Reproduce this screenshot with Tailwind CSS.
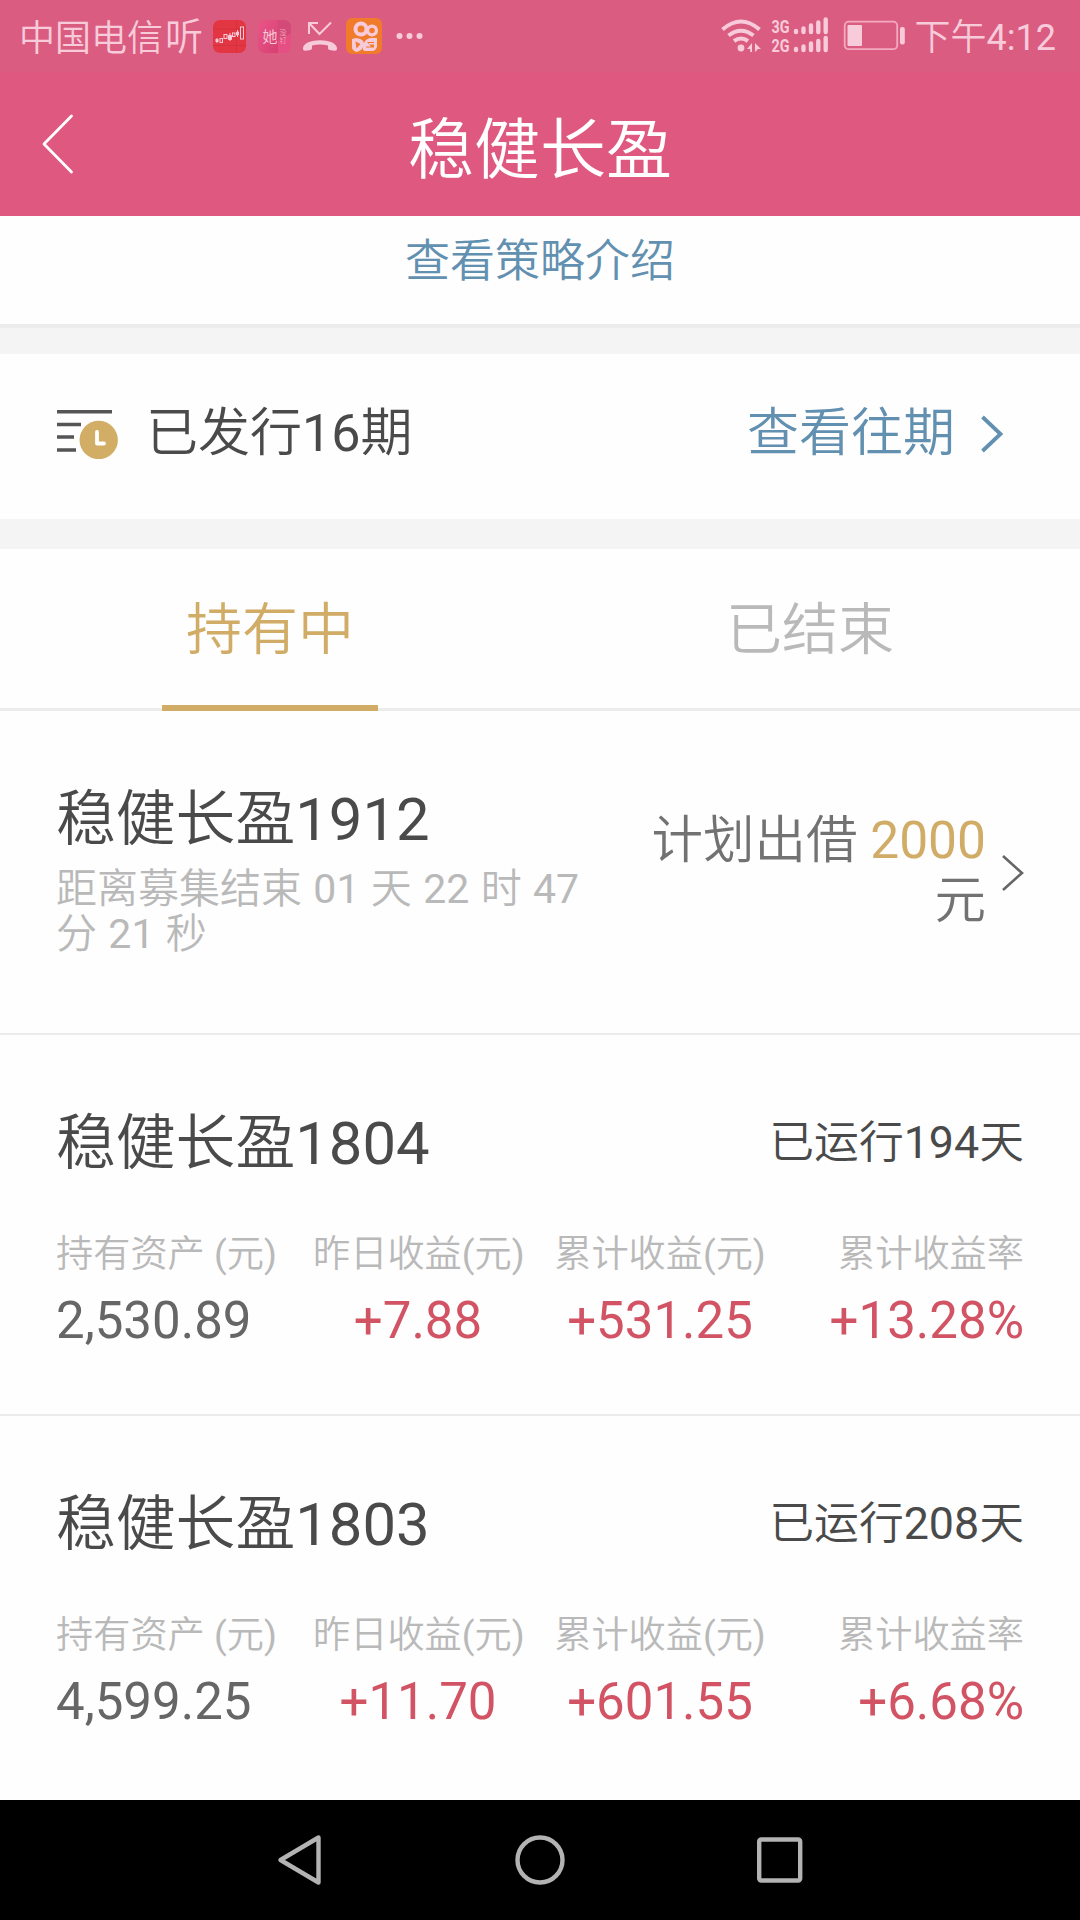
<!DOCTYPE html>
<html lang="zh-CN">
<head>
<meta charset="utf-8">
<title>稳健长盈</title>
<script src="https://cdn.jsdelivr.net/npm/@tailwindcss/browser@4"></script>
</head>
<body class="bg-white">
<div class="flex h-[1920px] w-[1080px] flex-col overflow-hidden bg-[#fefefe] font-['Roboto','Noto_Sans_CJK_SC_DemiLight','Noto_Sans_CJK_SC',sans-serif] text-[#4a4a4a] whitespace-nowrap">

  <!-- status bar -->
  <div class="flex h-[72px] shrink-0 items-center justify-between bg-[#da5d81] pl-[19px] pr-[24px] text-[36px] leading-[72px] text-[#f8cbda]">
    <div class="flex items-center">
      <span class="w-[146px] pt-[5px] leading-[68px]">中国电信</span>
      <span class="w-[48px] pt-[2px] text-[38px] leading-[70px]">听</span>
      <svg class="h-[36px] w-[180px]" viewBox="213 18 180 36">
        <defs><linearGradient id="rose" x1="0" x2="1" y1="0" y2="1"><stop offset="0" stop-color="#ea5689"/><stop offset="1" stop-color="#d73f70"/></linearGradient></defs>
        <rect x="213" y="20" width="33" height="33" rx="7" fill="#e23642"/>
        <path d="M236.500 20v33M213 45.500h33M213 29h33" stroke="#cf2f3d" stroke-width=".6"/>
        <g fill="#f8cbda" stroke="#f8cbda" stroke-width="1"><path d="M216 39h2v3h-2zM228.500 35.500h3v4h-3zM236.500 32h2v3h-2zM230 33v8M237.500 30v7" /></g>
        <g fill="none" stroke="#f8cbda" stroke-width="1"><rect x="220" y="38.500" width="2.500" height="4"/><rect x="224" y="34.500" width="3" height="4"/><rect x="232.500" y="33" width="2.500" height="3.500"/><rect x="240.500" y="27" width="3" height="12"/></g>
        <rect x="258" y="20" width="33" height="33" rx="7" fill="#e64f83"/>
        <path d="M265 20h13v33h-13a7 7 0 0 1-7-7V27a7 7 0 0 1 7-7z" fill="url(#rose)"/>
        <path d="M278 20h6a7 7 0 0 1 7 7v6l-13 8z" fill="#d34a78"/>
        <text x="262.500" y="42" font-size="15" fill="#f8cbda">她</text>
        <text x="279.500" y="35" font-size="7" fill="#f3a4c0">没</text>
        <text x="279.500" y="43" font-size="7" fill="#f3a4c0">钉</text>
        <path d="M309 34V23h9M309 23l10.500 11L331 22.500" fill="none" stroke="#f8cbda" stroke-width="2"/>
        <path d="M303 48.500c0-11 34-11 34 0v.5q0 2-2.500 1.800l-5-.8q-1.500-.3-1.500-2v-2.500q-8-2-16 0V48q0 1.700-1.500 2l-5 .8q-2.500.2-2.500-1.800z" fill="#f8cbda"/>
        <rect x="346" y="18" width="36" height="36" rx="6" fill="#f07c2b"/>
        <g fill="#f8cbda"><circle cx="361" cy="29" r="7.500"/><circle cx="372" cy="30.500" r="6"/><path d="M352 39l4-1q8 1 8 6t-7 8q-4-1-5-4zM364 43q2-5 8-5h5v9q-1 3-4 4h-8q-3-1-2-3z"/></g>
        <g fill="#f07c2b"><circle cx="361" cy="29" r="3.500"/><circle cx="372" cy="30.500" r="2.800"/><path d="M355.500 41.500l5 2.500-4 4.500zM367 42h7v1h-5v1.500h5v3h-8v-1h5z"/></g>
      </svg>
      <svg class="h-[8px] w-[30px]" viewBox="392.500 32 30 8" fill="#f8cbda"><circle cx="399" cy="36" r="3"/><circle cx="409" cy="36" r="3"/><circle cx="419" cy="36" r="3"/></svg>
    </div>
    <div class="flex items-center">
      <svg class="h-[40px] w-[195px]" viewBox="720 16 195 40" fill="#f8cbda">
        <g fill="none" stroke="#f8cbda" stroke-width="4"><path d="M722.500 29.500q18.500-16 37 0M728.500 35.500q12.500-9.500 25 0M734 41q7-5 14 0" /></g>
        <circle cx="741" cy="48" r="3.400"/>
        <path d="M752 43v9h-1.800v-3h-3.200zM755 43l6 6h-3l-3 3z"/>
        <text x="771.500" y="33" font-size="19" font-weight="700" textLength="18" lengthAdjust="spacingAndGlyphs">3G</text>
        <text x="771.500" y="52" font-size="19" font-weight="700" textLength="18" lengthAdjust="spacingAndGlyphs">2G</text>
        <g stroke="#f8cbda" stroke-width="4.400" stroke-linecap="round"><path d="M796 31v1M803.500 28.500V32M811 25.500V32M818.300 22.500V32M825.700 19.500V32M796 49v1M803.500 46.500V50M811 43.500V50M818.300 41V50M825.700 38V50"/></g>
        <rect x="844.700" y="21.700" width="52.500" height="27.500" rx="4" fill="none" stroke="#f3a9c0" stroke-width="1.800"/>
        <rect x="847.500" y="25" width="14.500" height="21" rx="1"/>
        <rect x="900" y="27" width="4.800" height="17.500" rx="2"/>
      </svg>
      <span class="pt-[4px] leading-[68px]">下午4:12</span>
    </div>
  </div>

  <!-- title bar -->
  <div class="grid h-[144px] shrink-0 grid-cols-[1fr_auto_1fr] items-center bg-[#df587f] px-[41px] text-white">
    <svg class="h-[62px] w-[34px]" viewBox="0 0 34 62" fill="none" stroke="#fff" stroke-width="2.800" stroke-linecap="round" stroke-linejoin="round"><path d="M30.500 3L3 31l27.500 28"/></svg>
    <h1 class="pt-[14px] text-[66px] leading-[80px]">稳健长盈</h1>
  </div>

  <div class="flex h-[108px] shrink-0 justify-center pt-[16px] text-[45px] leading-[60px] text-[#6290b0]">查看策略介绍</div>
  <div class="h-[30px] shrink-0 border-t-[4px] border-[#ececec] bg-[#f4f4f4]"></div>

  <!-- issued rounds -->
  <div class="flex h-[165px] shrink-0 items-center pb-[6px] pl-[57px] pr-[76px] text-[52px] leading-[60px]">
    <svg class="mt-[-2px] h-[52px] w-[62px]" viewBox="57 408 62 52">
      <path d="M57 412.700h55M57 425.500h24M57 438h17M57 451h19" stroke="#555" stroke-width="3.400"/>
      <circle cx="98.700" cy="441" r="19.200" fill="#d2ad65"/>
      <path d="M97 433v11.500h7" fill="none" stroke="#fff" stroke-width="3.800" stroke-linecap="round" stroke-linejoin="round"/>
    </svg>
    <span class="ml-[27px]">已发行16期</span>
    <span class="ml-auto text-[#6290b0]">查看往期</span>
    <svg class="mt-[1px] ml-[25px] h-[38px] w-[24px]" viewBox="0 0 24 38" fill="none" stroke="#6290b0" stroke-width="3.800"><path d="M2.500 2l18 17-18 17"/></svg>
  </div>
  <div class="h-[30px] shrink-0 bg-[#f4f4f4]"></div>

  <!-- tabs -->
  <div class="grid h-[162px] shrink-0 grid-cols-2 justify-items-center border-b-[3px] border-[#ececec] text-[56px] leading-[162px]">
    <div class="h-[162px] w-[216px] border-b-[6px] border-[#d0ac66] text-center text-[#d0ac66]">持有中</div>
    <div class="text-[#b9b9b9]">已结束</div>
  </div>

  <!-- open round -->
  <div class="flex h-[324px] shrink-0 border-b-2 border-[#ececec] pl-[56px] pr-[56px]">
    <div class="w-[540px] pt-[73px]">
      <h2 class="text-[59.8px] leading-[72px]">稳健长盈1912</h2>
      <p class="pt-[11px] text-[41px] leading-[45px] text-[#b9b9b9] [word-spacing:1.2px]">距离募集结束 01 天 22 时 47<br>分 21 秒</p>
    </div>
    <p class="ml-auto pt-[100px] text-right text-[51.5px] leading-[60px] text-[#727272]">计划出借 <span class="text-[#d0ac66]">2000</span><br>元</p>
    <svg class="mt-[143px] ml-[15px] h-[38px] w-[23px]" viewBox="0 0 23 38" fill="none" stroke="#666" stroke-width="2.600"><path d="M2 2l19 17L2 36"/></svg>
  </div>

  <!-- running rounds -->
  <div class="h-[381px] shrink-0 border-b-2 border-[#ececec] pl-[56px] pr-[56px] pt-[73px]">
    <div class="flex items-center justify-between">
      <h2 class="text-[59.8px] leading-[72px]">稳健长盈1804</h2>
      <span class="pb-[2px] text-[44.8px] leading-[60px]">已运行194天</span>
    </div>
    <div class="mt-[47px] grid grid-cols-[257px_210px_274px_1fr] text-[51px] leading-[60px] text-[#d15364]">
      <div><p class="text-[37.2px] leading-[54px] text-[#b9b9b9]">持有资产 (元)</p><p class="pt-[10px] text-[#666]">2,530.89</p></div>
      <div class="text-center"><p class="text-[37.2px] leading-[54px] text-[#b9b9b9]">昨日收益(元)</p><p class="pt-[10px]">+7.88</p></div>
      <div class="text-center"><p class="text-[37.2px] leading-[54px] text-[#b9b9b9]">累计收益(元)</p><p class="pt-[10px]">+531.25</p></div>
      <div class="flex flex-col items-end"><p class="text-[37.2px] leading-[54px] text-[#b9b9b9]">累计收益率</p><p class="pt-[10px]">+13.28%</p></div>
    </div>
  </div>
  <div class="h-[384px] shrink-0 pl-[56px] pr-[56px] pt-[73px]">
    <div class="flex items-center justify-between">
      <h2 class="text-[59.8px] leading-[72px]">稳健长盈1803</h2>
      <span class="pb-[2px] text-[44.8px] leading-[60px]">已运行208天</span>
    </div>
    <div class="mt-[47px] grid grid-cols-[257px_210px_274px_1fr] text-[51px] leading-[60px] text-[#d15364]">
      <div><p class="text-[37.2px] leading-[54px] text-[#b9b9b9]">持有资产 (元)</p><p class="pt-[10px] text-[#666]">4,599.25</p></div>
      <div class="text-center"><p class="text-[37.2px] leading-[54px] text-[#b9b9b9]">昨日收益(元)</p><p class="pt-[10px]">+11.70</p></div>
      <div class="text-center"><p class="text-[37.2px] leading-[54px] text-[#b9b9b9]">累计收益(元)</p><p class="pt-[10px]">+601.55</p></div>
      <div class="flex flex-col items-end"><p class="text-[37.2px] leading-[54px] text-[#b9b9b9]">累计收益率</p><p class="pt-[10px]">+6.68%</p></div>
    </div>
  </div>

  <!-- system navigation -->
  <div class="flex h-[120px] shrink-0 items-center justify-between bg-black pl-[276px] pr-[276px]">
    <svg class="h-[54px] w-[48px]" viewBox="276 1833 48 54" fill="none" stroke="#b3b3b3" stroke-width="4.400" stroke-linejoin="round"><path d="M318.500 1837.500v45L280.500 1860z"/></svg>
    <svg class="h-[54px] w-[54px]" viewBox="0 0 54 54" fill="none" stroke="#b3b3b3" stroke-width="4.400"><circle cx="27" cy="27" r="22.500"/></svg>
    <svg class="h-[48px] w-[48px]" viewBox="0 0 48 48" fill="none" stroke="#b3b3b3" stroke-width="4.400"><rect x="3.200" y="3.500" width="41" height="41" rx="2"/></svg>
  </div>
</div>
</body>
</html>
